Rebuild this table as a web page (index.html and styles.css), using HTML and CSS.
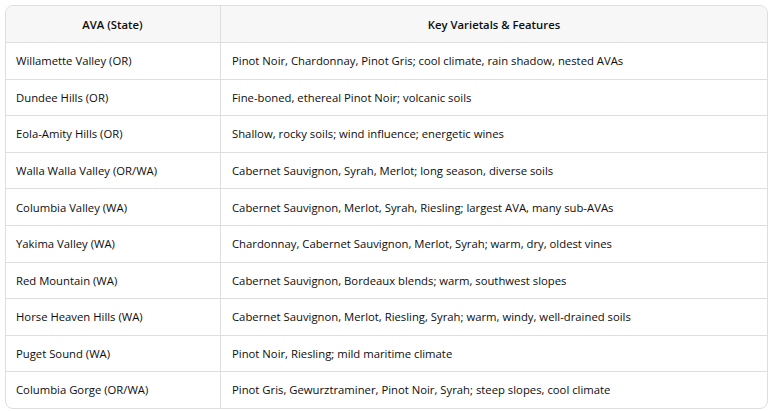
FILE: index.html
```html
<!DOCTYPE html>
<html>
<head>
<meta charset="utf-8">
<link rel="stylesheet" href="styles.css">
</head>
<body>
<div class="ava" role="table">
<div class="cell head c1">AVA (State)</div><div class="cell head c2">Key Varietals &amp; Features</div>
<div class="cell c1">Willamette Valley (OR)</div><div class="cell c2">Pinot Noir, Chardonnay, Pinot Gris; cool climate, rain shadow, nested AVAs</div>
<div class="cell c1">Dundee Hills (OR)</div><div class="cell c2">Fine-boned, ethereal Pinot Noir; volcanic soils</div>
<div class="cell c1">Eola-Amity Hills (OR)</div><div class="cell c2">Shallow, rocky soils; wind influence; energetic wines</div>
<div class="cell c1">Walla Walla Valley (OR/WA)</div><div class="cell c2">Cabernet Sauvignon, Syrah, Merlot; long season, diverse soils</div>
<div class="cell c1">Columbia Valley (WA)</div><div class="cell c2">Cabernet Sauvignon, Merlot, Syrah, Riesling; largest AVA, many sub-AVAs</div>
<div class="cell c1">Yakima Valley (WA)</div><div class="cell c2">Chardonnay, Cabernet Sauvignon, Merlot, Syrah; warm, dry, oldest vines</div>
<div class="cell c1">Red Mountain (WA)</div><div class="cell c2">Cabernet Sauvignon, Bordeaux blends; warm, southwest slopes</div>
<div class="cell c1">Horse Heaven Hills (WA)</div><div class="cell c2">Cabernet Sauvignon, Merlot, Riesling, Syrah; warm, windy, well-drained soils</div>
<div class="cell c1">Puget Sound (WA)</div><div class="cell c2">Pinot Noir, Riesling; mild maritime climate</div>
<div class="cell c1 last">Columbia Gorge (OR/WA)</div><div class="cell c2 last">Pinot Gris, Gewurztraminer, Pinot Noir, Syrah; steep slopes, cool climate</div>
</div>
</body>
</html>
```
FILE: styles.css
```css
html, body { margin: 0; padding: 0; background: #fff; }
body { padding: 5px 4px 0 5px; font-family: "Open Sans", "Noto Sans", sans-serif; font-size: 11.3px; color: #0d0d0d; }
.ava {
  width: 763px; box-sizing: border-box;
  border: 1px solid #dedede; border-radius: 8px; overflow: hidden;
  display: grid;
  grid-template-columns: 215px 1fr;
  grid-template-rows: 37px repeat(9, 36.6px) 35.2px;
}
.cell {
  display: flex; align-items: center;
  border-bottom: 1px solid #dedede;
  white-space: nowrap; box-sizing: border-box;
  padding: 0 11px;
}
.c1 { border-right: 1px solid #dedede; padding-left: 10px; }
.head { background: #f7f7f7; justify-content: center; font-weight: 600; }
.last { border-bottom: none; }
```
